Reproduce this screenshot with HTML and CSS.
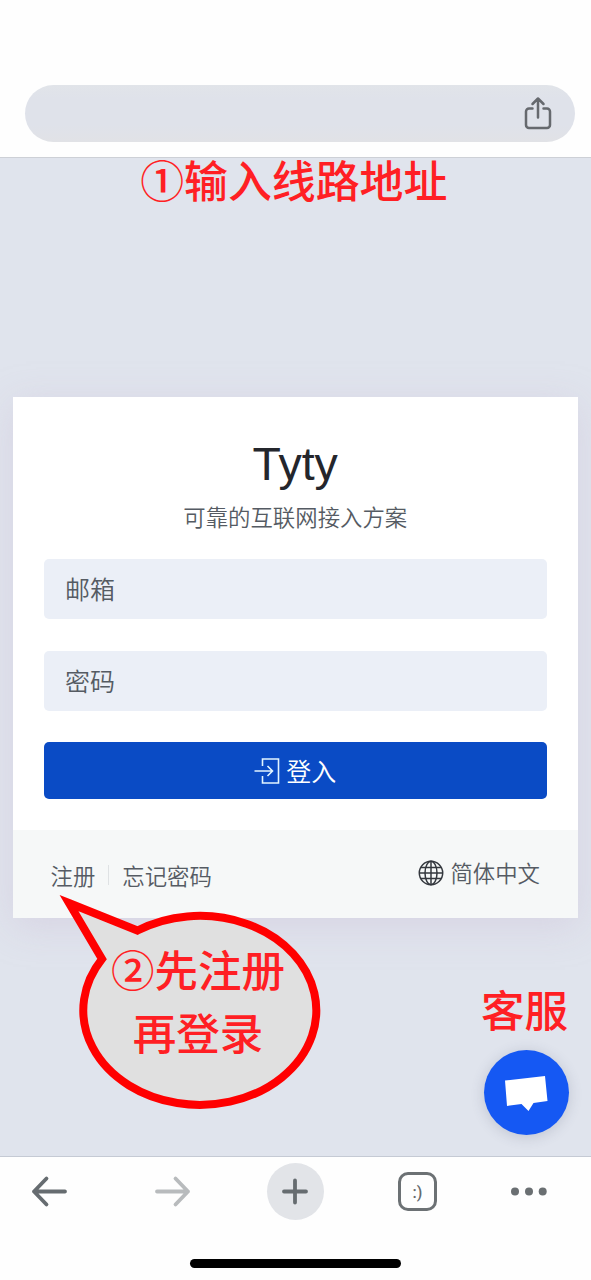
FILE: index.html
```html
<!DOCTYPE html>
<html lang="zh-CN">
<head>
<meta charset="utf-8">
<title>Tyty</title>
<link rel="stylesheet" href="styles.css">
</head>
<body>
<header class="topbar">
  <div class="address">
    <svg class="share" viewBox="0 0 28 36" width="28" height="36">
      <path d="M8.500 12.500H5a3 3 0 0 0-3 3V29a3 3 0 0 0 3 3h18a3 3 0 0 0 3-3V15.500a3 3 0 0 0-3-3h-3.500M14 21.500V3M8.500 8L14 2.500L19.500 8"/>
    </svg>
  </div>
</header>
<main class="page">
  <div class="note note-address">①输入线路地址</div>
  <section class="card">
    <div class="card-body">
      <h1 class="title">Tyty</h1>
      <p class="subtitle">可靠的互联网接入方案</p>
      <div class="field">邮箱</div>
      <div class="field">密码</div>
      <div class="submit">
        <svg viewBox="0 0 26 28" width="26" height="28"><path d="M8.500 9V2H24.500V26H8.500V19M0.500 14H18M13.500 9L18.500 14L13.500 19"/></svg>
        <span>登入</span>
      </div>
    </div>
    <footer class="card-footer">
      <nav class="links"><span>注册</span><i class="divider"></i><span>忘记密码</span></nav>
      <div class="language">
        <svg viewBox="0 0 26 26" width="26" height="26"><circle cx="13" cy="13" r="11.700"/><ellipse cx="13" cy="13" rx="6" ry="11.700"/><path d="M13 1.300V24.700M1.300 13H24.700M3 7.500H23M3 18.500H23"/></svg>
        <span>简体中文</span>
      </div>
    </footer>
  </section>
  <div class="callout">
    <svg class="bubble" viewBox="56 890 268 224" width="268" height="224">
      <path d="M70 903L138.500 930.500A116.500 94.500 0 1 1 103 959Z"/>
    </svg>
    <div class="note callout-text">②先注册<br>再登录</div>
  </div>
  <aside class="support">
    <div class="note">客服</div>
    <div class="chat">
      <svg viewBox="484 1050 85 85" width="85" height="85"><path d="M505 1080.500L545 1076L547.500 1101L533.500 1103L528.500 1111L521.500 1104L507 1106Z"/></svg>
    </div>
  </aside>
</main>
<footer class="toolbar">
  <svg class="tool" viewBox="0 0 40 40" width="40" height="40"><path d="M35 19.500H4M16.500 6.500L4 19.500L16.500 32.500"/></svg>
  <svg class="tool tool-off" viewBox="0 0 40 40" width="40" height="40"><path d="M4 19.500H35M22.500 6.500L35 19.500L22.500 32.500"/></svg>
  <span class="plus"><svg class="tool" viewBox="0 0 28 28" width="28" height="28"><path d="M3 13.500H25M14 2.500V24.500"/></svg></span>
  <span class="tabs">:)</span>
  <svg class="dots" viewBox="0 0 40 40" width="40" height="40"><circle cx="6" cy="19.500" r="4"/><circle cx="20" cy="19.500" r="4"/><circle cx="33.700" cy="19.500" r="4"/></svg>
  <div class="home"></div>
</footer>
</body>
</html>
```
FILE: styles.css
```css
* { box-sizing: border-box; }
body {
  margin: 0;
  width: 591px;
  height: 1280px;
  display: flex;
  flex-direction: column;
  overflow: hidden;
  background: #fff;
  font-family: "Noto Sans CJK SC", sans-serif;
  font-weight: 350;
  color: #555b63;
}
svg { display: block; flex: none; }
.topbar {
  height: 158px;
  padding: 85px 16px 0 25px;
  border-bottom: 1px solid #cdd0d6;
  background: #fefefe;
}
.address {
  height: 57px;
  border-radius: 29px;
  background: linear-gradient(#e1e4e9, #dfe2ea 25%, #dfe2ea 70%, #e1e2e6);
  display: flex;
  align-items: center;
  justify-content: flex-end;
  padding-right: 23px;
}
.share { fill: none; stroke: #66696e; stroke-width: 2.5; stroke-linecap: round; stroke-linejoin: round; }
.page {
  position: relative;
  height: 998px;
  background: #e0e4ed;
  padding: 0 13px 0 12.500px;
}
.note {
  font-family: "Noto Sans CJK SC", sans-serif;
  font-size: 43.900px;
  font-weight: 500;
  line-height: 62px;
  color: #ff1f24;
  white-space: nowrap;
  text-align: center;
}
.note-address { height: 239px; line-height: 42px; padding-right: 3px; }
.card {
  height: 521px;
  background: #fff;
  box-shadow: 0 8px 36px rgba(200, 185, 210, .38);
  display: flex;
  flex-direction: column;
}
.card-body {
  height: 433px;
  padding: 38px 31.500px 0;
  display: flex;
  flex-direction: column;
}
.title {
  margin: 0;
  font-family: "Liberation Sans", Arial, sans-serif;
  font-size: 46.500px;
  line-height: 58px;
  font-weight: 400;
  color: #24262c;
  text-align: center;
}
.subtitle { margin: 5px 0 25px; font-size: 22.400px; line-height: 36px; font-weight: inherit; text-align: center; }
.field {
  height: 60px;
  margin-bottom: 31.500px;
  padding-left: 21px;
  border-radius: 5px;
  background: #ebeff7;
  font-size: 25px;
  line-height: 59px;
}
.submit {
  height: 57px;
  border-radius: 5px;
  background: #0a4bc5;
  color: #fff;
  font-size: 25px;
  display: flex;
  align-items: center;
  justify-content: center;
  gap: 6px;
}
.submit svg { fill: none; stroke: #e2f5ff; stroke-width: 1.6; }
.submit span { padding-bottom: 2px; }
.card-footer {
  height: 88px;
  background: #f6f8f8;
  padding: 0 38px;
  display: flex;
  align-items: center;
  justify-content: space-between;
  font-size: 22.400px;
}
.links { display: flex; align-items: center; padding-top: 2px; }
.divider { width: 1px; height: 20px; margin: 0 13px; background: #dfe2e4; }
.language { display: flex; align-items: center; gap: 6px; padding-bottom: 3px; }
.language span { padding-bottom: 2px; }
.language svg { fill: none; stroke: #34383e; stroke-width: 1.5; }
.callout { position: absolute; left: 55px; top: 732px; width: 268px; height: 224px; }
.bubble { fill: #e0e0e0; stroke: #ff0000; stroke-width: 8; stroke-miterlimit: 10; }
.callout-text { position: absolute; left: 17px; top: 47px; width: 252px; font-size: 43.500px; line-height: 63px; }
.support { position: absolute; left: 480px; top: 820px; width: 93px; display: flex; flex-direction: column; align-items: center; gap: 10px; }
.support .note { margin-right: 4px; font-size: 43.500px; }
.chat { width: 85px; height: 85px; border-radius: 50%; background: #1558f3; box-shadow: 0 2px 14px rgba(60, 70, 100, .2); }
.chat path { fill: #fff; }
.toolbar {
  height: 124px;
  border-top: 1px solid #c5cad4;
  background: #fefefe;
  padding: 6px 0 0 30px;
  display: grid;
  grid-template-columns: 122.500px 114px 131.500px 111px 40px;
  grid-template-rows: 57px 1fr;
  align-items: center;
}
.tool { fill: none; stroke: #666c70; stroke-width: 3.8; stroke-linecap: round; stroke-linejoin: round; }
.tool-off { stroke: #b8bbbd; }
.plus { width: 57px; height: 57px; border-radius: 50%; background: #e2e4e8; display: grid; place-items: center; }
.tabs {
  width: 39px;
  height: 39px;
  border: 3.500px solid #6c7174;
  border-radius: 10px;
  font: 500 16px/36px Roboto, sans-serif;
  color: #666b6e;
  text-align: center;
}
.dots { fill: #6a6f72; }
.home { grid-column: 1 / -1; align-self: start; width: 211px; height: 8.500px; margin: 39px 0 0 160px; border-radius: 5px; background: #000; }
```
